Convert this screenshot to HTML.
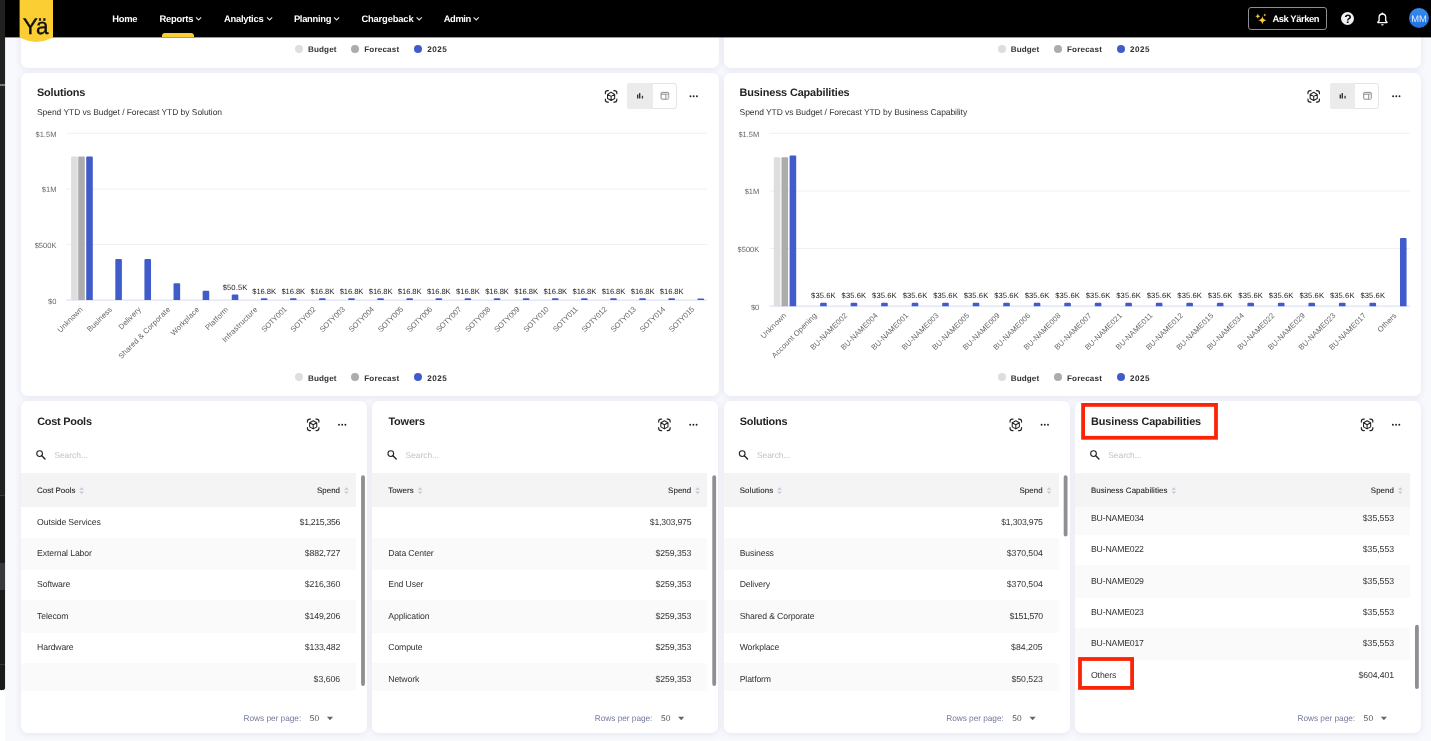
<!DOCTYPE html>
<html lang="en"><head><meta charset="utf-8"><title>Dashboard</title>
<style>
*{box-sizing:border-box;margin:0;padding:0}
html,body{width:1431px;height:741px;overflow:hidden}
body{text-rendering:geometricPrecision;background:#f8f9fd;font-family:"Liberation Sans",sans-serif;color:#222;position:relative}
.abs{position:absolute}
.t{position:absolute;white-space:nowrap;line-height:20px}
.b{font-weight:700}
.card{position:absolute;background:#fff;border-radius:7px;box-shadow:0 1px 7px rgba(70,75,140,.11)}
.nav{position:absolute;left:0;top:0;width:1431px;height:37px;background:#000}
svg{position:absolute;left:0;top:0;overflow:visible}
#root{position:absolute;left:0;top:0;width:1431px;height:741px;will-change:transform}
</style></head>
<body>
<div id="root">
<div class="card" style="left:21px;top:20px;width:697.7px;height:47.5px"></div>
<div class="card" style="left:723.6px;top:20px;width:697.4px;height:47.5px"></div>
<div class="card" style="left:21px;top:73px;width:697.7px;height:323px"></div>
<div class="card" style="left:723.6px;top:73px;width:697.4px;height:323px"></div>
<div class="card" style="left:21px;top:401px;width:346.1px;height:331.6px"></div>
<div class="card" style="left:372.2px;top:401px;width:346.1px;height:331.6px"></div>
<div class="card" style="left:723.6px;top:401px;width:346.1px;height:331.6px"></div>
<div class="card" style="left:1074.9px;top:401px;width:346.1px;height:331.6px"></div>
<svg width="1431" height="741"><rect x="0" y="0" width="1431" height="37.4" fill="#000"/></svg>
<svg width="1431" height="741"><path d="M19.6 0 H53 V37.3 Q36.3 46.5 19.6 37.3 Z" fill="#fbcf33"/></svg>
<div class="t" style="left:22.70px;top:17px;font-size:22.6px;color:#111;letter-spacing:-1.722px;-webkit-text-stroke:.35px #111;">Yä</div>
<div class="t b" style="left:112.30px;top:9px;font-size:9.4px;color:#fff;letter-spacing:-0.304px;">Home</div>
<div class="t b" style="left:159.60px;top:9px;font-size:9.4px;color:#fff;letter-spacing:-0.274px;">Reports</div>
<div class="t b" style="left:224.00px;top:9px;font-size:9.4px;color:#fff;letter-spacing:-0.255px;">Analytics</div>
<div class="t b" style="left:293.90px;top:9px;font-size:9.4px;color:#fff;letter-spacing:-0.299px;">Planning</div>
<div class="t b" style="left:361.40px;top:9px;font-size:9.4px;color:#fff;letter-spacing:-0.161px;">Chargeback</div>
<div class="t b" style="left:443.70px;top:9px;font-size:9.4px;color:#fff;letter-spacing:-0.388px;">Admin</div>
<svg width="1431" height="741"><path d="M196 17.3 l2.6 2.6 l2.6 -2.6" fill="none" stroke="#e6e6e6" stroke-width="1.05"/><path d="M267 17.3 l2.6 2.6 l2.6 -2.6" fill="none" stroke="#e6e6e6" stroke-width="1.05"/><path d="M334 17.3 l2.6 2.6 l2.6 -2.6" fill="none" stroke="#e6e6e6" stroke-width="1.05"/><path d="M416.6 17.3 l2.6 2.6 l2.6 -2.6" fill="none" stroke="#e6e6e6" stroke-width="1.05"/><path d="M473.6 17.3 l2.6 2.6 l2.6 -2.6" fill="none" stroke="#e6e6e6" stroke-width="1.05"/></svg>
<div class="abs" style="left:161.6px;top:33px;width:32.6px;height:4px;background:#fbcf33;border-radius:3px 3px 0 0"></div>
<div class="abs" style="left:1248px;top:7px;width:79px;height:22.8px;border:1px solid #8e8e8e;border-radius:3px"></div>
<div class="t b" style="left:1272.40px;top:9px;font-size:9.4px;color:#fff;letter-spacing:-0.414px;">Ask Yärken</div>
<svg width="1431" height="741"><path d="M1262.4 16.1 Q1262.8200000000002 19.88 1266.6000000000001 20.3 Q1262.8200000000002 20.720000000000002 1262.4 24.5 Q1261.98 20.720000000000002 1258.2 20.3 Q1261.98 19.88 1262.4 16.1Z M1257.8 13.7 Q1258.05 15.95 1260.3 16.2 Q1258.05 16.45 1257.8 18.7 Q1257.55 16.45 1255.3 16.2 Q1257.55 15.95 1257.8 13.7Z M1264.8 13.5 Q1264.95 14.85 1266.3 15 Q1264.95 15.15 1264.8 16.5 Q1264.6499999999999 15.15 1263.3 15 Q1264.6499999999999 14.85 1264.8 13.5Z" fill="#fbcf33"/></svg>
<div class="abs" style="left:1341.1px;top:11.7px;width:13.4px;height:13.4px;border-radius:50%;background:#f1f1f6"></div>
<div class="t b" style="left:1344.25px;top:9px;font-size:12.2px;color:#000;">?</div>
<svg width="1431" height="741"><path d="M1377.8 22.6 h9.2 v-0.5 l-1.3 -1.4 v-3.4 a3.3 3.3 0 0 0 -6.6 0 v3.4 l-1.3 1.4z" fill="none" stroke="#fff" stroke-width="1.3" stroke-linejoin="round"/><path d="M1381.1 24.2 a1.3 1.3 0 0 0 2.6 0z" fill="#fff"/><circle cx="1382.4" cy="13.4" r=".9" fill="#fff"/></svg>
<div class="abs" style="left:1409px;top:8.4px;width:20px;height:20px;border-radius:50%;background:linear-gradient(#3a8af0,#1f6fe0)"></div>
<div class="t" style="left:1411.30px;top:9px;font-size:9.4px;color:#dfeaff;letter-spacing:-0.031px;">MM</div>
<div class="abs" style="left:0;top:0;width:5px;height:741px;background:#fff"></div>
<div class="abs" style="left:0;top:0;width:5px;height:690px;background:#212121;border-radius:0 0 3px 0;box-shadow:0 0 1px rgba(0,0,0,.5)"></div>
<div class="abs" style="left:0;top:496px;width:5px;height:194px;background:#1b1b1b;border-radius:0 0 3px 0"></div>
<div class="abs" style="left:0;top:84px;width:5px;height:2px;background:#7a7a7a"></div>
<div class="abs" style="left:0;top:495px;width:5px;height:1px;background:#3a3a3a"></div>
<div class="abs" style="left:0;top:563px;width:5px;height:27px;background:#38383c"></div>
<div class="abs" style="left:0;top:664px;width:5px;height:1px;background:#363636"></div>
<div class="abs" style="left:294.9px;top:44.6px;width:8px;height:8px;border-radius:50%;background:#dedede"></div>
<div class="t b" style="left:308.00px;top:40px;font-size:8.1px;color:#333;letter-spacing:0.117px;">Budget</div>
<div class="abs" style="left:351.1px;top:44.6px;width:8px;height:8px;border-radius:50%;background:#acacac"></div>
<div class="t b" style="left:364.20px;top:40px;font-size:8.1px;color:#333;letter-spacing:0.179px;">Forecast</div>
<div class="abs" style="left:414.1px;top:44.6px;width:8px;height:8px;border-radius:50%;background:#405ccb"></div>
<div class="t b" style="left:427.20px;top:40px;font-size:8.1px;color:#333;letter-spacing:0.495px;">2025</div>
<div class="abs" style="left:997.6px;top:44.6px;width:8px;height:8px;border-radius:50%;background:#dedede"></div>
<div class="t b" style="left:1010.70px;top:40px;font-size:8.1px;color:#333;letter-spacing:0.117px;">Budget</div>
<div class="abs" style="left:1053.8px;top:44.6px;width:8px;height:8px;border-radius:50%;background:#acacac"></div>
<div class="t b" style="left:1066.90px;top:40px;font-size:8.1px;color:#333;letter-spacing:0.179px;">Forecast</div>
<div class="abs" style="left:1116.8px;top:44.6px;width:8px;height:8px;border-radius:50%;background:#405ccb"></div>
<div class="t b" style="left:1129.90px;top:40px;font-size:8.1px;color:#333;letter-spacing:0.495px;">2025</div>
<div class="abs" style="left:294.9px;top:373.0px;width:8px;height:8px;border-radius:50%;background:#dedede"></div>
<div class="t b" style="left:308.00px;top:369px;font-size:8.1px;color:#333;letter-spacing:0.117px;">Budget</div>
<div class="abs" style="left:351.1px;top:373.0px;width:8px;height:8px;border-radius:50%;background:#acacac"></div>
<div class="t b" style="left:364.20px;top:369px;font-size:8.1px;color:#333;letter-spacing:0.179px;">Forecast</div>
<div class="abs" style="left:414.1px;top:373.0px;width:8px;height:8px;border-radius:50%;background:#405ccb"></div>
<div class="t b" style="left:427.20px;top:369px;font-size:8.1px;color:#333;letter-spacing:0.495px;">2025</div>
<div class="abs" style="left:997.6px;top:373.0px;width:8px;height:8px;border-radius:50%;background:#dedede"></div>
<div class="t b" style="left:1010.70px;top:369px;font-size:8.1px;color:#333;letter-spacing:0.117px;">Budget</div>
<div class="abs" style="left:1053.8px;top:373.0px;width:8px;height:8px;border-radius:50%;background:#acacac"></div>
<div class="t b" style="left:1066.90px;top:369px;font-size:8.1px;color:#333;letter-spacing:0.179px;">Forecast</div>
<div class="abs" style="left:1116.8px;top:373.0px;width:8px;height:8px;border-radius:50%;background:#405ccb"></div>
<div class="t b" style="left:1129.90px;top:369px;font-size:8.1px;color:#333;letter-spacing:0.495px;">2025</div>
<div class="t b" style="left:37.00px;top:83px;font-size:10.9px;color:#222;letter-spacing:-0.161px;">Solutions</div>
<div class="t" style="left:37.00px;top:102px;font-size:8.5px;color:#333;letter-spacing:-0.059px;">Spend YTD vs Budget / Forecast YTD by Solution</div>
<div class="abs" style="left:627.2px;top:83px;width:49.6px;height:25.8px;border:1px solid #e4e4e4;border-radius:3px;background:#fff"></div>
<div class="abs" style="left:627.2px;top:83px;width:25.6px;height:25.8px;border-radius:3px 0 0 3px;background:#ebebeb"></div>
<svg width="1431" height="741"><path d="M605.35 93.65 V92.95 Q605.35 90.65 607.65 90.65 H608.35 M616.85 93.65 V92.95 Q616.85 90.65 614.55 90.65 H613.85 M616.85 99.15 V99.85 Q616.85 102.15 614.55 102.15 H613.85 M605.35 99.15 V99.85 Q605.35 102.15 607.65 102.15 H608.35 " fill="none" stroke="#222" stroke-width="1.15" stroke-linecap="round"/><path d="M611.1 92.30 L614.67 94.35 V98.45 L611.1 100.50 L607.53 98.45 V94.35Z M607.53 94.35 L611.1 96.4 L614.67 94.35 M611.1 96.4 V100.50" fill="none" stroke="#222" stroke-width="1.05" stroke-linejoin="round"/><circle cx="690.5" cy="96.2" r="0.95" fill="#222"/><circle cx="693.7" cy="96.2" r="0.95" fill="#222"/><circle cx="696.9000000000001" cy="96.2" r="0.95" fill="#222"/><rect x="637.00" y="94.5" width="1.4" height="4.1" rx=".3" fill="#333"/><rect x="639.00" y="93.0" width="1.4" height="5.6" rx=".3" fill="#333"/><rect x="641.80" y="95.7" width="1.3" height="2.9" rx=".3" fill="#333"/><rect x="661.10" y="92.4" width="7.6" height="6.8" rx="1" fill="none" stroke="#666" stroke-width=".75"/><path d="M661.10 94.2 h7.6 M665.90 94.2 v5" stroke="#666" stroke-width=".75" fill="none"/><rect x="665.90" y="94.2" width="2.8" height="5" fill="#ddd" opacity=".6"/></svg>
<div class="t b" style="left:739.60px;top:83px;font-size:10.9px;color:#222;letter-spacing:-0.127px;">Business Capabilities</div>
<div class="t" style="left:739.60px;top:102px;font-size:8.5px;color:#333;letter-spacing:-0.065px;">Spend YTD vs Budget / Forecast YTD by Business Capability</div>
<div class="abs" style="left:1329.8000000000002px;top:83px;width:49.6px;height:25.8px;border:1px solid #e4e4e4;border-radius:3px;background:#fff"></div>
<div class="abs" style="left:1329.8000000000002px;top:83px;width:25.6px;height:25.8px;border-radius:3px 0 0 3px;background:#ebebeb"></div>
<svg width="1431" height="741"><path d="M1307.95 93.65 V92.95 Q1307.95 90.65 1310.25 90.65 H1310.95 M1319.45 93.65 V92.95 Q1319.45 90.65 1317.15 90.65 H1316.45 M1319.45 99.15 V99.85 Q1319.45 102.15 1317.15 102.15 H1316.45 M1307.95 99.15 V99.85 Q1307.95 102.15 1310.25 102.15 H1310.95 " fill="none" stroke="#222" stroke-width="1.15" stroke-linecap="round"/><path d="M1313.7 92.30 L1317.27 94.35 V98.45 L1313.7 100.50 L1310.13 98.45 V94.35Z M1310.13 94.35 L1313.7 96.4 L1317.27 94.35 M1313.7 96.4 V100.50" fill="none" stroke="#222" stroke-width="1.05" stroke-linejoin="round"/><circle cx="1393.1000000000001" cy="96.2" r="0.95" fill="#222"/><circle cx="1396.3000000000002" cy="96.2" r="0.95" fill="#222"/><circle cx="1399.5000000000002" cy="96.2" r="0.95" fill="#222"/><rect x="1339.60" y="94.5" width="1.4" height="4.1" rx=".3" fill="#333"/><rect x="1341.60" y="93.0" width="1.4" height="5.6" rx=".3" fill="#333"/><rect x="1344.40" y="95.7" width="1.3" height="2.9" rx=".3" fill="#333"/><rect x="1363.70" y="92.4" width="7.6" height="6.8" rx="1" fill="none" stroke="#666" stroke-width=".75"/><path d="M1363.70 94.2 h7.6 M1368.50 94.2 v5" stroke="#666" stroke-width=".75" fill="none"/><rect x="1368.50" y="94.2" width="2.8" height="5" fill="#ddd" opacity=".6"/></svg>
<svg width="1431" height="741" font-family='"Liberation Sans", sans-serif'><path d="M66.6 133.3 H707.0" stroke="#ececf1" stroke-width="0.8"/><text x="56.4" y="137" text-anchor="end" font-size="7.5" fill="#666">$1.5M</text><path d="M66.6 189.0 H707.0" stroke="#ececf1" stroke-width="0.8"/><text x="56.4" y="192" text-anchor="end" font-size="7.5" fill="#666">$1M</text><path d="M66.6 244.5 H707.0" stroke="#ececf1" stroke-width="0.8"/><text x="56.4" y="248" text-anchor="end" font-size="7.5" fill="#666">$500K</text><path d="M66.6 300.1 H707.0" stroke="#dde2f6" stroke-width="1.2"/><text x="56.4" y="304" text-anchor="end" font-size="7.5" fill="#666">$0</text><path d="M71.10 300.1 v-142.56 q0 -1 1 -1 h4.60 q1 0 1 1 v142.56z" fill="#dedede"/><path d="M78.20 300.1 v-142.56 q0 -1 1 -1 h4.60 q1 0 1 1 v142.56z" fill="#acacac"/><path d="M86.20 300.1 v-142.56 q0 -1 1 -1 h4.60 q1 0 1 1 v142.56z" fill="#405ccb"/><text transform="translate(83.4 309.9) rotate(-45)" text-anchor="end" font-size="7.6" letter-spacing="0.12" fill="#666">Unknown</text><path d="M115.31 300.1 v-40.20 q0 -1.00 1.00 -1.00 h4.60 q1.00 0 1.00 1.00 v40.20z" fill="#405ccb"/><text transform="translate(112.5 309.9) rotate(-45)" text-anchor="end" font-size="7.6" letter-spacing="0.12" fill="#666">Business</text><path d="M144.42 300.1 v-40.20 q0 -1.00 1.00 -1.00 h4.60 q1.00 0 1.00 1.00 v40.20z" fill="#405ccb"/><text transform="translate(141.6 309.9) rotate(-45)" text-anchor="end" font-size="7.6" letter-spacing="0.12" fill="#666">Delivery</text><path d="M173.53 300.1 v-15.85 q0 -1.00 1.00 -1.00 h4.60 q1.00 0 1.00 1.00 v15.85z" fill="#405ccb"/><text transform="translate(170.7 309.9) rotate(-45)" text-anchor="end" font-size="7.6" letter-spacing="0.12" fill="#666">Shared &amp; Corporate</text><path d="M202.64 300.1 v-8.36 q0 -1.00 1.00 -1.00 h4.60 q1.00 0 1.00 1.00 v8.36z" fill="#405ccb"/><text transform="translate(199.8 309.9) rotate(-45)" text-anchor="end" font-size="7.6" letter-spacing="0.12" fill="#666">Workplace</text><path d="M231.75 300.1 v-4.62 q0 -1.00 1.00 -1.00 h4.60 q1.00 0 1.00 1.00 v4.62z" fill="#405ccb"/><text x="235.05" y="290" text-anchor="middle" font-size="7.6" letter-spacing="0.1" fill="#222">$50.5K</text><text transform="translate(228.9 309.9) rotate(-45)" text-anchor="end" font-size="7.6" letter-spacing="0.12" fill="#666">Platform</text><path d="M260.85 300.1 v-0.93 q0 -0.93 0.93 -0.93 h4.73 q0.93 0 0.93 0.93 v0.93z" fill="#405ccb"/><text x="264.15" y="294" text-anchor="middle" font-size="7.6" letter-spacing="-0.07" fill="#222">$16.8K</text><text transform="translate(258.0 309.9) rotate(-45)" text-anchor="end" font-size="7.6" letter-spacing="0.12" fill="#666">Infrastructure</text><path d="M289.96 300.1 v-0.93 q0 -0.93 0.93 -0.93 h4.73 q0.93 0 0.93 0.93 v0.93z" fill="#405ccb"/><text x="293.26" y="294" text-anchor="middle" font-size="7.6" letter-spacing="-0.07" fill="#222">$16.8K</text><text transform="translate(287.1 309.9) rotate(-45)" text-anchor="end" font-size="7.6" letter-spacing="-0.19" fill="#666">SOTY001</text><path d="M319.07 300.1 v-0.93 q0 -0.93 0.93 -0.93 h4.73 q0.93 0 0.93 0.93 v0.93z" fill="#405ccb"/><text x="322.37" y="294" text-anchor="middle" font-size="7.6" letter-spacing="-0.07" fill="#222">$16.8K</text><text transform="translate(316.2 309.9) rotate(-45)" text-anchor="end" font-size="7.6" letter-spacing="-0.19" fill="#666">SOTY002</text><path d="M348.18 300.1 v-0.93 q0 -0.93 0.93 -0.93 h4.73 q0.93 0 0.93 0.93 v0.93z" fill="#405ccb"/><text x="351.48" y="294" text-anchor="middle" font-size="7.6" letter-spacing="-0.07" fill="#222">$16.8K</text><text transform="translate(345.3 309.9) rotate(-45)" text-anchor="end" font-size="7.6" letter-spacing="-0.19" fill="#666">SOTY003</text><path d="M377.29 300.1 v-0.93 q0 -0.93 0.93 -0.93 h4.73 q0.93 0 0.93 0.93 v0.93z" fill="#405ccb"/><text x="380.59" y="294" text-anchor="middle" font-size="7.6" letter-spacing="-0.07" fill="#222">$16.8K</text><text transform="translate(374.4 309.9) rotate(-45)" text-anchor="end" font-size="7.6" letter-spacing="-0.19" fill="#666">SOTY004</text><path d="M406.40 300.1 v-0.93 q0 -0.93 0.93 -0.93 h4.73 q0.93 0 0.93 0.93 v0.93z" fill="#405ccb"/><text x="409.70" y="294" text-anchor="middle" font-size="7.6" letter-spacing="-0.07" fill="#222">$16.8K</text><text transform="translate(403.6 309.9) rotate(-45)" text-anchor="end" font-size="7.6" letter-spacing="-0.19" fill="#666">SOTY005</text><path d="M435.51 300.1 v-0.93 q0 -0.93 0.93 -0.93 h4.73 q0.93 0 0.93 0.93 v0.93z" fill="#405ccb"/><text x="438.81" y="294" text-anchor="middle" font-size="7.6" letter-spacing="-0.07" fill="#222">$16.8K</text><text transform="translate(432.7 309.9) rotate(-45)" text-anchor="end" font-size="7.6" letter-spacing="-0.19" fill="#666">SOTY006</text><path d="M464.62 300.1 v-0.93 q0 -0.93 0.93 -0.93 h4.73 q0.93 0 0.93 0.93 v0.93z" fill="#405ccb"/><text x="467.92" y="294" text-anchor="middle" font-size="7.6" letter-spacing="-0.07" fill="#222">$16.8K</text><text transform="translate(461.8 309.9) rotate(-45)" text-anchor="end" font-size="7.6" letter-spacing="-0.19" fill="#666">SOTY007</text><path d="M493.73 300.1 v-0.93 q0 -0.93 0.93 -0.93 h4.73 q0.93 0 0.93 0.93 v0.93z" fill="#405ccb"/><text x="497.03" y="294" text-anchor="middle" font-size="7.6" letter-spacing="-0.07" fill="#222">$16.8K</text><text transform="translate(490.9 309.9) rotate(-45)" text-anchor="end" font-size="7.6" letter-spacing="-0.19" fill="#666">SOTY008</text><path d="M522.84 300.1 v-0.93 q0 -0.93 0.93 -0.93 h4.73 q0.93 0 0.93 0.93 v0.93z" fill="#405ccb"/><text x="526.14" y="294" text-anchor="middle" font-size="7.6" letter-spacing="-0.07" fill="#222">$16.8K</text><text transform="translate(520.0 309.9) rotate(-45)" text-anchor="end" font-size="7.6" letter-spacing="-0.19" fill="#666">SOTY009</text><path d="M551.95 300.1 v-0.93 q0 -0.93 0.93 -0.93 h4.73 q0.93 0 0.93 0.93 v0.93z" fill="#405ccb"/><text x="555.25" y="294" text-anchor="middle" font-size="7.6" letter-spacing="-0.07" fill="#222">$16.8K</text><text transform="translate(549.1 309.9) rotate(-45)" text-anchor="end" font-size="7.6" letter-spacing="-0.19" fill="#666">SOTY010</text><path d="M581.05 300.1 v-0.93 q0 -0.93 0.93 -0.93 h4.73 q0.93 0 0.93 0.93 v0.93z" fill="#405ccb"/><text x="584.35" y="294" text-anchor="middle" font-size="7.6" letter-spacing="-0.07" fill="#222">$16.8K</text><text transform="translate(578.2 309.9) rotate(-45)" text-anchor="end" font-size="7.6" letter-spacing="-0.19" fill="#666">SOTY011</text><path d="M610.16 300.1 v-0.93 q0 -0.93 0.93 -0.93 h4.73 q0.93 0 0.93 0.93 v0.93z" fill="#405ccb"/><text x="613.46" y="294" text-anchor="middle" font-size="7.6" letter-spacing="-0.07" fill="#222">$16.8K</text><text transform="translate(607.3 309.9) rotate(-45)" text-anchor="end" font-size="7.6" letter-spacing="-0.19" fill="#666">SOTY012</text><path d="M639.27 300.1 v-0.93 q0 -0.93 0.93 -0.93 h4.73 q0.93 0 0.93 0.93 v0.93z" fill="#405ccb"/><text x="642.57" y="294" text-anchor="middle" font-size="7.6" letter-spacing="-0.07" fill="#222">$16.8K</text><text transform="translate(636.4 309.9) rotate(-45)" text-anchor="end" font-size="7.6" letter-spacing="-0.19" fill="#666">SOTY013</text><path d="M668.38 300.1 v-0.93 q0 -0.93 0.93 -0.93 h4.73 q0.93 0 0.93 0.93 v0.93z" fill="#405ccb"/><text x="671.68" y="294" text-anchor="middle" font-size="7.6" letter-spacing="-0.07" fill="#222">$16.8K</text><text transform="translate(665.5 309.9) rotate(-45)" text-anchor="end" font-size="7.6" letter-spacing="-0.19" fill="#666">SOTY014</text><path d="M697.49 300.1 v-0.85 q0 -0.85 0.85 -0.85 h4.90 q0.85 0 0.85 0.85 v0.85z" fill="#405ccb"/><text transform="translate(694.6 309.9) rotate(-45)" text-anchor="end" font-size="7.6" letter-spacing="-0.19" fill="#666">SOTY015</text></svg>
<svg width="1431" height="741" font-family='"Liberation Sans", sans-serif'><path d="M769.3 133.3 H1410.2" stroke="#ececf1" stroke-width="0.8"/><text x="759.3" y="137" text-anchor="end" font-size="7.5" fill="#666">$1.5M</text><path d="M769.3 191 H1410.2" stroke="#ececf1" stroke-width="0.8"/><text x="759.3" y="194" text-anchor="end" font-size="7.5" fill="#666">$1M</text><path d="M769.3 248.5 H1410.2" stroke="#ececf1" stroke-width="0.8"/><text x="759.3" y="252" text-anchor="end" font-size="7.5" fill="#666">$500K</text><path d="M769.3 306.2 H1410.2" stroke="#dde2f6" stroke-width="1.2"/><text x="759.3" y="310" text-anchor="end" font-size="7.5" fill="#666">$0</text><path d="M773.80 306.2 v-147.92 q0 -1 1 -1 h4.60 q1 0 1 1 v147.92z" fill="#dedede"/><path d="M781.50 306.2 v-147.92 q0 -1 1 -1 h4.60 q1 0 1 1 v147.92z" fill="#acacac"/><path d="M789.60 306.2 v-149.77 q0 -1 1 -1 h4.60 q1 0 1 1 v149.77z" fill="#405ccb"/><text transform="translate(786.8 316.0) rotate(-45)" text-anchor="end" font-size="7.6" letter-spacing="0.12" fill="#666">Unknown</text><path d="M820.12 306.2 v-2.46 q0 -1.00 1.00 -1.00 h4.60 q1.00 0 1.00 1.00 v2.46z" fill="#405ccb"/><text x="823.42" y="298" text-anchor="middle" font-size="7.6" letter-spacing="0.1" fill="#222">$35.6K</text><text transform="translate(817.3 316.0) rotate(-45)" text-anchor="end" font-size="7.6" letter-spacing="0.12" fill="#666">Account Opening</text><path d="M850.64 306.2 v-2.46 q0 -1.00 1.00 -1.00 h4.60 q1.00 0 1.00 1.00 v2.46z" fill="#405ccb"/><text x="853.94" y="298" text-anchor="middle" font-size="7.6" letter-spacing="0.1" fill="#222">$35.6K</text><text transform="translate(847.8 316.0) rotate(-45)" text-anchor="end" font-size="7.6" letter-spacing="0.12" fill="#666">BU-NAME002</text><path d="M881.16 306.2 v-2.46 q0 -1.00 1.00 -1.00 h4.60 q1.00 0 1.00 1.00 v2.46z" fill="#405ccb"/><text x="884.46" y="298" text-anchor="middle" font-size="7.6" letter-spacing="0.1" fill="#222">$35.6K</text><text transform="translate(878.3 316.0) rotate(-45)" text-anchor="end" font-size="7.6" letter-spacing="0.12" fill="#666">BU-NAME004</text><path d="M911.68 306.2 v-2.46 q0 -1.00 1.00 -1.00 h4.60 q1.00 0 1.00 1.00 v2.46z" fill="#405ccb"/><text x="914.98" y="298" text-anchor="middle" font-size="7.6" letter-spacing="0.1" fill="#222">$35.6K</text><text transform="translate(908.8 316.0) rotate(-45)" text-anchor="end" font-size="7.6" letter-spacing="0.12" fill="#666">BU-NAME001</text><path d="M942.20 306.2 v-2.46 q0 -1.00 1.00 -1.00 h4.60 q1.00 0 1.00 1.00 v2.46z" fill="#405ccb"/><text x="945.50" y="298" text-anchor="middle" font-size="7.6" letter-spacing="0.1" fill="#222">$35.6K</text><text transform="translate(939.4 316.0) rotate(-45)" text-anchor="end" font-size="7.6" letter-spacing="0.12" fill="#666">BU-NAME003</text><path d="M972.71 306.2 v-2.46 q0 -1.00 1.00 -1.00 h4.60 q1.00 0 1.00 1.00 v2.46z" fill="#405ccb"/><text x="976.01" y="298" text-anchor="middle" font-size="7.6" letter-spacing="0.1" fill="#222">$35.6K</text><text transform="translate(969.9 316.0) rotate(-45)" text-anchor="end" font-size="7.6" letter-spacing="0.12" fill="#666">BU-NAME005</text><path d="M1003.23 306.2 v-2.46 q0 -1.00 1.00 -1.00 h4.60 q1.00 0 1.00 1.00 v2.46z" fill="#405ccb"/><text x="1006.53" y="298" text-anchor="middle" font-size="7.6" letter-spacing="0.1" fill="#222">$35.6K</text><text transform="translate(1000.4 316.0) rotate(-45)" text-anchor="end" font-size="7.6" letter-spacing="0.12" fill="#666">BU-NAME009</text><path d="M1033.75 306.2 v-2.46 q0 -1.00 1.00 -1.00 h4.60 q1.00 0 1.00 1.00 v2.46z" fill="#405ccb"/><text x="1037.05" y="298" text-anchor="middle" font-size="7.6" letter-spacing="0.1" fill="#222">$35.6K</text><text transform="translate(1030.9 316.0) rotate(-45)" text-anchor="end" font-size="7.6" letter-spacing="0.12" fill="#666">BU-NAME006</text><path d="M1064.27 306.2 v-2.46 q0 -1.00 1.00 -1.00 h4.60 q1.00 0 1.00 1.00 v2.46z" fill="#405ccb"/><text x="1067.57" y="298" text-anchor="middle" font-size="7.6" letter-spacing="0.1" fill="#222">$35.6K</text><text transform="translate(1061.4 316.0) rotate(-45)" text-anchor="end" font-size="7.6" letter-spacing="0.12" fill="#666">BU-NAME008</text><path d="M1094.79 306.2 v-2.46 q0 -1.00 1.00 -1.00 h4.60 q1.00 0 1.00 1.00 v2.46z" fill="#405ccb"/><text x="1098.09" y="298" text-anchor="middle" font-size="7.6" letter-spacing="0.1" fill="#222">$35.6K</text><text transform="translate(1092.0 316.0) rotate(-45)" text-anchor="end" font-size="7.6" letter-spacing="0.12" fill="#666">BU-NAME007</text><path d="M1125.31 306.2 v-2.46 q0 -1.00 1.00 -1.00 h4.60 q1.00 0 1.00 1.00 v2.46z" fill="#405ccb"/><text x="1128.61" y="298" text-anchor="middle" font-size="7.6" letter-spacing="0.1" fill="#222">$35.6K</text><text transform="translate(1122.5 316.0) rotate(-45)" text-anchor="end" font-size="7.6" letter-spacing="0.12" fill="#666">BU-NAME021</text><path d="M1155.83 306.2 v-2.46 q0 -1.00 1.00 -1.00 h4.60 q1.00 0 1.00 1.00 v2.46z" fill="#405ccb"/><text x="1159.13" y="298" text-anchor="middle" font-size="7.6" letter-spacing="0.1" fill="#222">$35.6K</text><text transform="translate(1153.0 316.0) rotate(-45)" text-anchor="end" font-size="7.6" letter-spacing="0.12" fill="#666">BU-NAME011</text><path d="M1186.35 306.2 v-2.46 q0 -1.00 1.00 -1.00 h4.60 q1.00 0 1.00 1.00 v2.46z" fill="#405ccb"/><text x="1189.65" y="298" text-anchor="middle" font-size="7.6" letter-spacing="0.1" fill="#222">$35.6K</text><text transform="translate(1183.5 316.0) rotate(-45)" text-anchor="end" font-size="7.6" letter-spacing="0.12" fill="#666">BU-NAME012</text><path d="M1216.87 306.2 v-2.46 q0 -1.00 1.00 -1.00 h4.60 q1.00 0 1.00 1.00 v2.46z" fill="#405ccb"/><text x="1220.17" y="298" text-anchor="middle" font-size="7.6" letter-spacing="0.1" fill="#222">$35.6K</text><text transform="translate(1214.0 316.0) rotate(-45)" text-anchor="end" font-size="7.6" letter-spacing="0.12" fill="#666">BU-NAME015</text><path d="M1247.39 306.2 v-2.46 q0 -1.00 1.00 -1.00 h4.60 q1.00 0 1.00 1.00 v2.46z" fill="#405ccb"/><text x="1250.69" y="298" text-anchor="middle" font-size="7.6" letter-spacing="0.1" fill="#222">$35.6K</text><text transform="translate(1244.5 316.0) rotate(-45)" text-anchor="end" font-size="7.6" letter-spacing="0.12" fill="#666">BU-NAME034</text><path d="M1277.90 306.2 v-2.46 q0 -1.00 1.00 -1.00 h4.60 q1.00 0 1.00 1.00 v2.46z" fill="#405ccb"/><text x="1281.20" y="298" text-anchor="middle" font-size="7.6" letter-spacing="0.1" fill="#222">$35.6K</text><text transform="translate(1275.1 316.0) rotate(-45)" text-anchor="end" font-size="7.6" letter-spacing="0.12" fill="#666">BU-NAME022</text><path d="M1308.42 306.2 v-2.46 q0 -1.00 1.00 -1.00 h4.60 q1.00 0 1.00 1.00 v2.46z" fill="#405ccb"/><text x="1311.72" y="298" text-anchor="middle" font-size="7.6" letter-spacing="0.1" fill="#222">$35.6K</text><text transform="translate(1305.6 316.0) rotate(-45)" text-anchor="end" font-size="7.6" letter-spacing="0.12" fill="#666">BU-NAME029</text><path d="M1338.94 306.2 v-2.46 q0 -1.00 1.00 -1.00 h4.60 q1.00 0 1.00 1.00 v2.46z" fill="#405ccb"/><text x="1342.24" y="298" text-anchor="middle" font-size="7.6" letter-spacing="0.1" fill="#222">$35.6K</text><text transform="translate(1336.1 316.0) rotate(-45)" text-anchor="end" font-size="7.6" letter-spacing="0.12" fill="#666">BU-NAME023</text><path d="M1369.46 306.2 v-2.46 q0 -1.00 1.00 -1.00 h4.60 q1.00 0 1.00 1.00 v2.46z" fill="#405ccb"/><text x="1372.76" y="298" text-anchor="middle" font-size="7.6" letter-spacing="0.1" fill="#222">$35.6K</text><text transform="translate(1366.6 316.0) rotate(-45)" text-anchor="end" font-size="7.6" letter-spacing="0.12" fill="#666">BU-NAME017</text><path d="M1399.98 306.2 v-67.24 q0 -1.00 1.00 -1.00 h4.60 q1.00 0 1.00 1.00 v67.24z" fill="#405ccb"/><text transform="translate(1397.1 316.0) rotate(-45)" text-anchor="end" font-size="7.6" letter-spacing="0.12" fill="#666">Others</text></svg>
<div class="t b" style="left:37.20px;top:412px;font-size:10.9px;color:#222;letter-spacing:-0.233px;">Cost Pools</div>
<div class="t" style="left:54.40px;top:445px;font-size:8.4px;color:#c2c2c2;letter-spacing:-0.013px;">Search...</div>
<div class="t" style="left:37.10px;top:512px;font-size:8.7px;color:#333;letter-spacing:-0.135px;">Outside Services</div>
<div class="t" style="left:299.60px;top:512px;font-size:8.7px;color:#333;letter-spacing:-0.294px;">$1,215,356</div>
<div class="abs" style="left:21px;top:537.58px;width:335.2px;height:32.48px;background:#fafafa"></div>
<div class="t" style="left:37.10px;top:543px;font-size:8.7px;color:#333;letter-spacing:-0.132px;">External Labor</div>
<div class="t" style="left:304.70px;top:543px;font-size:8.7px;color:#333;letter-spacing:-0.098px;">$882,727</div>
<div class="t" style="left:37.10px;top:574px;font-size:8.7px;color:#333;letter-spacing:-0.141px;">Software</div>
<div class="t" style="left:304.70px;top:574px;font-size:8.7px;color:#333;letter-spacing:-0.098px;">$216,360</div>
<div class="abs" style="left:21px;top:600.34px;width:335.2px;height:32.48px;background:#fafafa"></div>
<div class="t" style="left:37.10px;top:606px;font-size:8.7px;color:#333;letter-spacing:-0.152px;">Telecom</div>
<div class="t" style="left:304.70px;top:606px;font-size:8.7px;color:#333;letter-spacing:-0.098px;">$149,206</div>
<div class="t" style="left:37.10px;top:637px;font-size:8.7px;color:#333;letter-spacing:-0.154px;">Hardware</div>
<div class="t" style="left:304.70px;top:637px;font-size:8.7px;color:#333;letter-spacing:-0.098px;">$133,482</div>
<div class="abs" style="left:21px;top:663.10px;width:335.2px;height:28.30px;background:#fafafa"></div>
<div class="t" style="left:313.60px;top:669px;font-size:8.7px;color:#333;">$3,606</div>
<div class="abs" style="left:21px;top:473.4px;width:335.2px;height:33.2px;background:#f4f4f4"></div>
<div class="t" style="left:37.10px;top:481px;font-size:7.9px;color:#222;letter-spacing:0.010px;-webkit-text-stroke:.08px #222;">Cost Pools</div>
<div class="t" style="left:316.90px;top:481px;font-size:7.9px;color:#222;letter-spacing:0.071px;-webkit-text-stroke:.08px #222;">Spend</div>
<div class="t" style="left:243.60px;top:708px;font-size:8.3px;color:#747b9e;letter-spacing:-0.038px;">Rows per page:</div>
<div class="t" style="left:309.70px;top:708px;font-size:8.3px;color:#555;letter-spacing:0.184px;">50</div>
<svg width="1431" height="741"><path d="M307.45 422.05 V421.35 Q307.45 419.05 309.75 419.05 H310.45 M318.95 422.05 V421.35 Q318.95 419.05 316.65 419.05 H315.95 M318.95 427.55 V428.25 Q318.95 430.55 316.65 430.55 H315.95 M307.45 427.55 V428.25 Q307.45 430.55 309.75 430.55 H310.45 " fill="none" stroke="#222" stroke-width="1.15" stroke-linecap="round"/><path d="M313.2 420.70 L316.77 422.75 V426.85 L313.2 428.90 L309.63 426.85 V422.75Z M309.63 422.75 L313.2 424.8 L316.77 422.75 M313.2 424.8 V428.90" fill="none" stroke="#222" stroke-width="1.05" stroke-linejoin="round"/><circle cx="339.0" cy="424.7" r="0.95" fill="#222"/><circle cx="342.2" cy="424.7" r="0.95" fill="#222"/><circle cx="345.4" cy="424.7" r="0.95" fill="#222"/><circle cx="39.6" cy="453.6" r="2.85" fill="none" stroke="#222" stroke-width="1.1"/><path d="M41.80 455.80 l3.2 3.2" stroke="#222" stroke-width="1.35" stroke-linecap="round"/><path d="M79.30 489.8 l2.3 -2.5 l2.3 2.5z M79.30 491.5 l2.3 2.5 l2.3 -2.5z" fill="#c5c7dd"/><path d="M344.10 489.8 l2.3 -2.5 l2.3 2.5z M344.10 491.5 l2.3 2.5 l2.3 -2.5z" fill="#c5c7dd"/><rect x="361.1" y="475.2" width="3.8" height="210.8" rx="1.9" fill="#8f8f8f"/><path d="M326.9 716.8 h6.2 l-3.1 3.5z" fill="#666"/></svg>
<div class="t b" style="left:388.40px;top:412px;font-size:10.9px;color:#222;letter-spacing:-0.142px;">Towers</div>
<div class="t" style="left:405.60px;top:445px;font-size:8.4px;color:#c2c2c2;letter-spacing:-0.013px;">Search...</div>
<div class="t" style="left:649.80px;top:512px;font-size:8.7px;color:#333;letter-spacing:-0.194px;">$1,303,975</div>
<div class="abs" style="left:372.2px;top:537.58px;width:335.2px;height:32.48px;background:#fafafa"></div>
<div class="t" style="left:388.30px;top:543px;font-size:8.7px;color:#333;letter-spacing:-0.140px;">Data Center</div>
<div class="t" style="left:655.40px;top:543px;font-size:8.7px;color:#333;letter-spacing:-0.036px;">$259,353</div>
<div class="t" style="left:388.30px;top:574px;font-size:8.7px;color:#333;letter-spacing:-0.149px;">End User</div>
<div class="t" style="left:655.40px;top:574px;font-size:8.7px;color:#333;letter-spacing:-0.036px;">$259,353</div>
<div class="abs" style="left:372.2px;top:600.34px;width:335.2px;height:32.48px;background:#fafafa"></div>
<div class="t" style="left:388.30px;top:606px;font-size:8.7px;color:#333;letter-spacing:-0.127px;">Application</div>
<div class="t" style="left:655.40px;top:606px;font-size:8.7px;color:#333;letter-spacing:-0.036px;">$259,353</div>
<div class="t" style="left:388.30px;top:637px;font-size:8.7px;color:#333;letter-spacing:-0.165px;">Compute</div>
<div class="t" style="left:655.40px;top:637px;font-size:8.7px;color:#333;letter-spacing:-0.036px;">$259,353</div>
<div class="abs" style="left:372.2px;top:663.10px;width:335.2px;height:28.30px;background:#fafafa"></div>
<div class="t" style="left:388.30px;top:669px;font-size:8.7px;color:#333;letter-spacing:-0.149px;">Network</div>
<div class="t" style="left:655.40px;top:669px;font-size:8.7px;color:#333;letter-spacing:-0.036px;">$259,353</div>
<div class="abs" style="left:372.2px;top:473.4px;width:335.2px;height:33.2px;background:#f4f4f4"></div>
<div class="t" style="left:388.30px;top:481px;font-size:7.9px;color:#222;letter-spacing:0.096px;-webkit-text-stroke:.08px #222;">Towers</div>
<div class="t" style="left:668.10px;top:481px;font-size:7.9px;color:#222;letter-spacing:0.071px;-webkit-text-stroke:.08px #222;">Spend</div>
<div class="t" style="left:594.80px;top:708px;font-size:8.3px;color:#747b9e;letter-spacing:-0.038px;">Rows per page:</div>
<div class="t" style="left:660.90px;top:708px;font-size:8.3px;color:#555;letter-spacing:0.184px;">50</div>
<svg width="1431" height="741"><path d="M658.65 422.05 V421.35 Q658.65 419.05 660.95 419.05 H661.65 M670.15 422.05 V421.35 Q670.15 419.05 667.85 419.05 H667.15 M670.15 427.55 V428.25 Q670.15 430.55 667.85 430.55 H667.15 M658.65 427.55 V428.25 Q658.65 430.55 660.95 430.55 H661.65 " fill="none" stroke="#222" stroke-width="1.15" stroke-linecap="round"/><path d="M664.4 420.70 L667.97 422.75 V426.85 L664.4 428.90 L660.83 426.85 V422.75Z M660.83 422.75 L664.4 424.8 L667.97 422.75 M664.4 424.8 V428.90" fill="none" stroke="#222" stroke-width="1.05" stroke-linejoin="round"/><circle cx="690.1999999999999" cy="424.7" r="0.95" fill="#222"/><circle cx="693.4" cy="424.7" r="0.95" fill="#222"/><circle cx="696.6" cy="424.7" r="0.95" fill="#222"/><circle cx="390.8" cy="453.6" r="2.85" fill="none" stroke="#222" stroke-width="1.1"/><path d="M393.00 455.80 l3.2 3.2" stroke="#222" stroke-width="1.35" stroke-linecap="round"/><path d="M417.80 489.8 l2.3 -2.5 l2.3 2.5z M417.80 491.5 l2.3 2.5 l2.3 -2.5z" fill="#c5c7dd"/><path d="M695.30 489.8 l2.3 -2.5 l2.3 2.5z M695.30 491.5 l2.3 2.5 l2.3 -2.5z" fill="#c5c7dd"/><rect x="712.3" y="475.2" width="3.8" height="210.8" rx="1.9" fill="#8f8f8f"/><path d="M678.1 716.8 h6.2 l-3.1 3.5z" fill="#666"/></svg>
<div class="t b" style="left:739.80px;top:412px;font-size:10.9px;color:#222;letter-spacing:-0.239px;">Solutions</div>
<div class="t" style="left:757.00px;top:445px;font-size:8.4px;color:#c2c2c2;letter-spacing:-0.013px;">Search...</div>
<div class="t" style="left:1001.20px;top:512px;font-size:8.7px;color:#333;letter-spacing:-0.194px;">$1,303,975</div>
<div class="abs" style="left:723.6px;top:537.58px;width:335.2px;height:32.48px;background:#fafafa"></div>
<div class="t" style="left:739.70px;top:543px;font-size:8.7px;color:#333;letter-spacing:-0.145px;">Business</div>
<div class="t" style="left:1006.80px;top:543px;font-size:8.7px;color:#333;letter-spacing:-0.036px;">$370,504</div>
<div class="t" style="left:739.70px;top:574px;font-size:8.7px;color:#333;letter-spacing:-0.129px;">Delivery</div>
<div class="t" style="left:1006.80px;top:574px;font-size:8.7px;color:#333;letter-spacing:-0.036px;">$370,504</div>
<div class="abs" style="left:723.6px;top:600.34px;width:335.2px;height:32.48px;background:#fafafa"></div>
<div class="t" style="left:739.70px;top:606px;font-size:8.7px;color:#333;letter-spacing:-0.141px;">Shared &amp; Corporate</div>
<div class="t" style="left:1009.60px;top:606px;font-size:8.7px;color:#333;letter-spacing:-0.386px;">$151,570</div>
<div class="t" style="left:739.70px;top:637px;font-size:8.7px;color:#333;letter-spacing:-0.149px;">Workplace</div>
<div class="t" style="left:1011.00px;top:637px;font-size:8.7px;color:#333;letter-spacing:0.050px;">$84,205</div>
<div class="abs" style="left:723.6px;top:663.10px;width:335.2px;height:28.30px;background:#fafafa"></div>
<div class="t" style="left:739.70px;top:669px;font-size:8.7px;color:#333;letter-spacing:-0.133px;">Platform</div>
<div class="t" style="left:1011.50px;top:669px;font-size:8.7px;color:#333;letter-spacing:-0.021px;">$50,523</div>
<div class="abs" style="left:723.6px;top:473.4px;width:335.2px;height:33.2px;background:#f4f4f4"></div>
<div class="t" style="left:739.70px;top:481px;font-size:7.9px;color:#222;letter-spacing:0.122px;-webkit-text-stroke:.08px #222;">Solutions</div>
<div class="t" style="left:1019.50px;top:481px;font-size:7.9px;color:#222;letter-spacing:0.071px;-webkit-text-stroke:.08px #222;">Spend</div>
<div class="t" style="left:946.20px;top:708px;font-size:8.3px;color:#747b9e;letter-spacing:-0.038px;">Rows per page:</div>
<div class="t" style="left:1012.30px;top:708px;font-size:8.3px;color:#555;letter-spacing:0.184px;">50</div>
<svg width="1431" height="741"><path d="M1010.05 422.05 V421.35 Q1010.05 419.05 1012.35 419.05 H1013.05 M1021.55 422.05 V421.35 Q1021.55 419.05 1019.25 419.05 H1018.55 M1021.55 427.55 V428.25 Q1021.55 430.55 1019.25 430.55 H1018.55 M1010.05 427.55 V428.25 Q1010.05 430.55 1012.35 430.55 H1013.05 " fill="none" stroke="#222" stroke-width="1.15" stroke-linecap="round"/><path d="M1015.8 420.70 L1019.37 422.75 V426.85 L1015.8 428.90 L1012.23 426.85 V422.75Z M1012.23 422.75 L1015.8 424.8 L1019.37 422.75 M1015.8 424.8 V428.90" fill="none" stroke="#222" stroke-width="1.05" stroke-linejoin="round"/><circle cx="1041.6" cy="424.7" r="0.95" fill="#222"/><circle cx="1044.8" cy="424.7" r="0.95" fill="#222"/><circle cx="1048.0" cy="424.7" r="0.95" fill="#222"/><circle cx="742.2" cy="453.6" r="2.85" fill="none" stroke="#222" stroke-width="1.1"/><path d="M744.40 455.80 l3.2 3.2" stroke="#222" stroke-width="1.35" stroke-linecap="round"/><path d="M777.20 489.8 l2.3 -2.5 l2.3 2.5z M777.20 491.5 l2.3 2.5 l2.3 -2.5z" fill="#c5c7dd"/><path d="M1046.70 489.8 l2.3 -2.5 l2.3 2.5z M1046.70 491.5 l2.3 2.5 l2.3 -2.5z" fill="#c5c7dd"/><rect x="1063.7" y="475.2" width="3.8" height="61.19999999999999" rx="1.9" fill="#8f8f8f"/><path d="M1029.5 716.8 h6.2 l-3.1 3.5z" fill="#666"/></svg>
<div class="t b" style="left:1091.10px;top:412px;font-size:10.9px;color:#222;letter-spacing:-0.127px;">Business Capabilities</div>
<div class="t" style="left:1108.30px;top:445px;font-size:8.4px;color:#c2c2c2;letter-spacing:-0.013px;">Search...</div>
<div class="abs" style="left:1074.9px;top:506.40px;width:335.2px;height:28.48px;background:#fafafa"></div>
<div class="t" style="left:1091.00px;top:508px;font-size:8.7px;color:#333;letter-spacing:-0.179px;">BU-NAME034</div>
<div class="t" style="left:1362.80px;top:508px;font-size:8.7px;color:#333;letter-spacing:-0.021px;">$35,553</div>
<div class="t" style="left:1091.00px;top:539px;font-size:8.7px;color:#333;letter-spacing:-0.179px;">BU-NAME022</div>
<div class="t" style="left:1362.80px;top:539px;font-size:8.7px;color:#333;letter-spacing:-0.021px;">$35,553</div>
<div class="abs" style="left:1074.9px;top:565.16px;width:335.2px;height:32.48px;background:#fafafa"></div>
<div class="t" style="left:1091.00px;top:571px;font-size:8.7px;color:#333;letter-spacing:-0.179px;">BU-NAME029</div>
<div class="t" style="left:1362.80px;top:571px;font-size:8.7px;color:#333;letter-spacing:-0.021px;">$35,553</div>
<div class="t" style="left:1091.00px;top:602px;font-size:8.7px;color:#333;letter-spacing:-0.179px;">BU-NAME023</div>
<div class="t" style="left:1362.80px;top:602px;font-size:8.7px;color:#333;letter-spacing:-0.021px;">$35,553</div>
<div class="abs" style="left:1074.9px;top:627.92px;width:335.2px;height:32.48px;background:#fafafa"></div>
<div class="t" style="left:1091.00px;top:633px;font-size:8.7px;color:#333;letter-spacing:-0.179px;">BU-NAME017</div>
<div class="t" style="left:1362.80px;top:633px;font-size:8.7px;color:#333;letter-spacing:-0.021px;">$35,553</div>
<div class="t" style="left:1091.00px;top:665px;font-size:8.7px;color:#333;letter-spacing:-0.143px;">Others</div>
<div class="t" style="left:1358.60px;top:665px;font-size:8.7px;color:#333;letter-spacing:-0.098px;">$604,401</div>
<div class="abs" style="left:1074.9px;top:473.4px;width:335.2px;height:33.2px;background:#f4f4f4"></div>
<div class="t" style="left:1091.00px;top:481px;font-size:7.9px;color:#222;letter-spacing:0.072px;-webkit-text-stroke:.08px #222;">Business Capabilities</div>
<div class="t" style="left:1370.80px;top:481px;font-size:7.9px;color:#222;letter-spacing:0.071px;-webkit-text-stroke:.08px #222;">Spend</div>
<div class="t" style="left:1297.50px;top:708px;font-size:8.3px;color:#747b9e;letter-spacing:-0.038px;">Rows per page:</div>
<div class="t" style="left:1363.60px;top:708px;font-size:8.3px;color:#555;letter-spacing:0.184px;">50</div>
<svg width="1431" height="741"><path d="M1361.35 422.05 V421.35 Q1361.35 419.05 1363.65 419.05 H1364.35 M1372.85 422.05 V421.35 Q1372.85 419.05 1370.55 419.05 H1369.85 M1372.85 427.55 V428.25 Q1372.85 430.55 1370.55 430.55 H1369.85 M1361.35 427.55 V428.25 Q1361.35 430.55 1363.65 430.55 H1364.35 " fill="none" stroke="#222" stroke-width="1.15" stroke-linecap="round"/><path d="M1367.1000000000001 420.70 L1370.67 422.75 V426.85 L1367.1000000000001 428.90 L1363.53 426.85 V422.75Z M1363.53 422.75 L1367.1000000000001 424.8 L1370.67 422.75 M1367.1000000000001 424.8 V428.90" fill="none" stroke="#222" stroke-width="1.05" stroke-linejoin="round"/><circle cx="1392.9" cy="424.7" r="0.95" fill="#222"/><circle cx="1396.1000000000001" cy="424.7" r="0.95" fill="#222"/><circle cx="1399.3000000000002" cy="424.7" r="0.95" fill="#222"/><circle cx="1093.5" cy="453.6" r="2.85" fill="none" stroke="#222" stroke-width="1.1"/><path d="M1095.70 455.80 l3.2 3.2" stroke="#222" stroke-width="1.35" stroke-linecap="round"/><path d="M1171.50 489.8 l2.3 -2.5 l2.3 2.5z M1171.50 491.5 l2.3 2.5 l2.3 -2.5z" fill="#c5c7dd"/><path d="M1398.00 489.8 l2.3 -2.5 l2.3 2.5z M1398.00 491.5 l2.3 2.5 l2.3 -2.5z" fill="#c5c7dd"/><rect x="1415.0" y="624.8" width="3.8" height="64.20000000000005" rx="1.9" fill="#8f8f8f"/><path d="M1380.8 716.8 h6.2 l-3.1 3.5z" fill="#666"/></svg>
<svg width="1431" height="741"><rect x="1083.1" y="404.9" width="132.9" height="32.9" fill="none" stroke="#fb2407" stroke-width="3.8"/><rect x="1080" y="659" width="52.1" height="28.9" fill="none" stroke="#fb2407" stroke-width="3.8"/></svg>
</div>
</body></html>
